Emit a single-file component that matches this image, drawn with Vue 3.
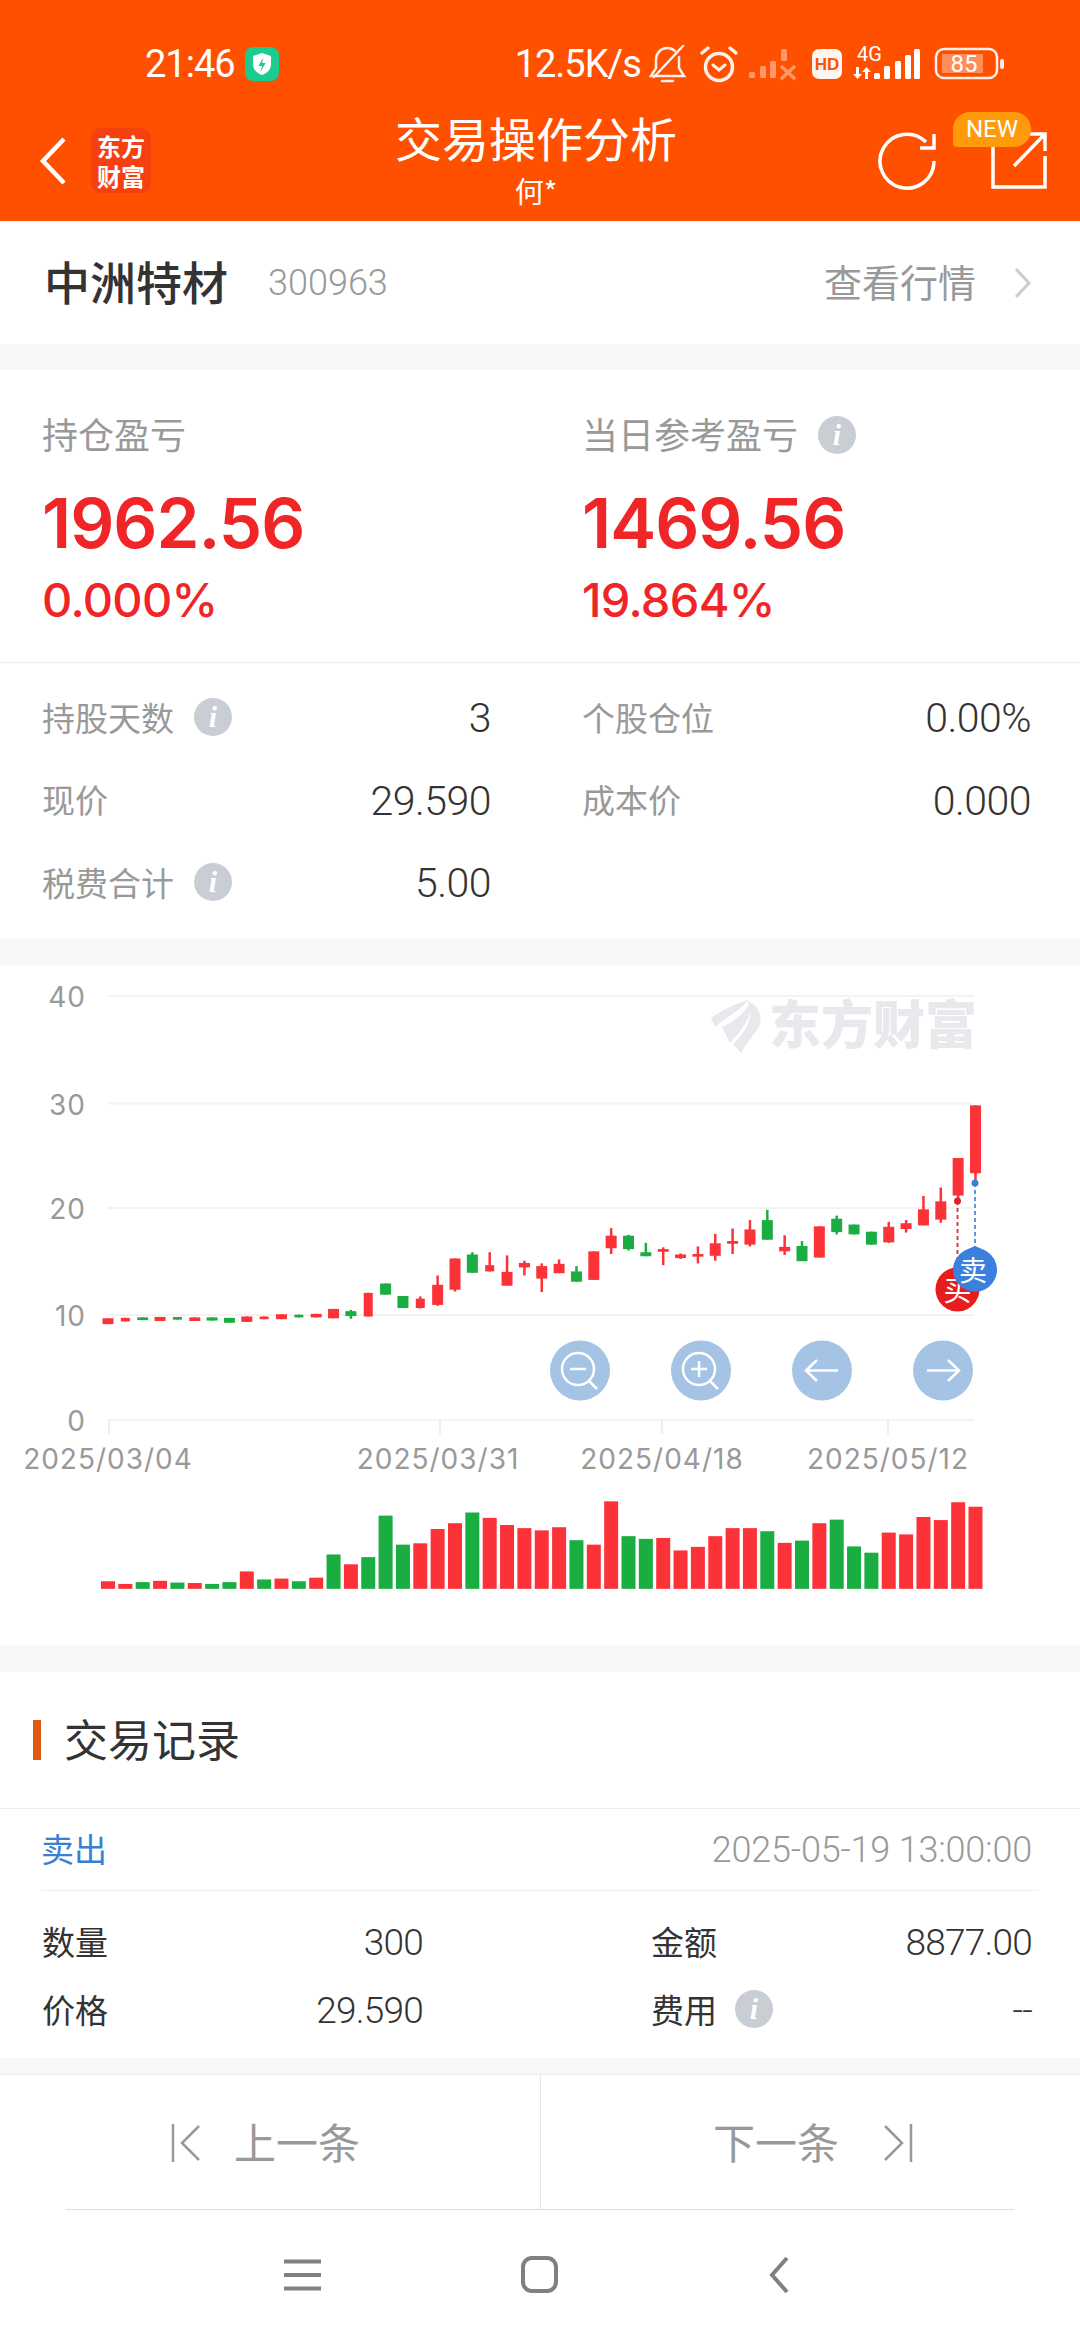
<script setup>
// values read off the chart, y in full page pixels after conversion
const toY = (z) => 950 + z / 2.24
const cx = (i) => 108 + i * 17.35

// color, body top, body bottom, wick top, wick bottom
const raw = [
  ['r', 825, 838], ['r', 824, 832], ['g', 823, 829], ['r', 822, 831], ['g', 822, 828],
  ['r', 823, 831], ['g', 823, 830], ['g', 824, 835], ['r', 821, 833], ['r', 821, 827],
  ['r', 816, 827], ['g', 817, 823], ['r', 815, 823], ['r', 804, 825], ['g', 809, 820, 806, 826],
  ['r', 768, 821], ['g', 747, 772], ['g', 775, 802], ['r', 781, 802, 776, 803], ['r', 750, 795, 729, 797],
  ['r', 691, 761, 691, 765], ['g', 682, 723, 677, 723], ['r', 706, 720, 677, 720], ['r', 721, 752, 684, 752], ['r', 701, 711, 696, 729],
  ['r', 708, 736, 702, 766], ['r', 703, 724, 693, 724], ['g', 720, 743, 708, 743], ['r', 675, 739], ['r', 640, 668, 623, 681],
  ['g', 640, 670, 638, 673], ['g', 677, 686, 656, 686], ['r', 670, 676, 666, 706], ['r', 682, 690, 680, 692], ['r', 681, 687, 664, 702],
  ['r', 657, 685, 636, 696], ['r', 652, 658, 624, 681], ['r', 626, 660, 605, 664], ['g', 605, 649, 582, 649], ['r', 665, 675, 639, 683],
  ['g', 663, 697, 652, 697], ['r', 619, 689], ['g', 602, 632, 595, 637], ['g', 615, 637], ['g', 631, 660],
  ['r', 620, 655, 609, 656], ['r', 612, 625, 605, 633], ['r', 581, 617, 551, 617], ['r', 563, 604, 532, 611], ['r', 466, 550, 466, 558],
  ['r', 348, 500, 348, 520]
]
const narrow = [1, 4, 9, 11, 15, 18, 22]
const candles = raw.map((c, i) => ({
  color: c[0] === 'r' ? '#fb3338' : '#1aad41',
  x: cx(i),
  w: narrow.includes(i) ? 9 : 11,
  top: toY(c[1]),
  h: (c[2] - c[1]) / 2.24,
  wt: toY(c[3] ?? c[1]),
  wb: toY(c[4] ?? c[2])
}))

const rawVol = [
  ['r', 1414], ['r', 1420], ['g', 1416], ['r', 1413], ['g', 1417], ['r', 1418], ['g', 1420], ['g', 1416], ['r', 1392], ['g', 1410],
  ['r', 1408], ['g', 1414], ['r', 1406], ['g', 1354], ['r', 1376], ['g', 1360], ['g', 1267], ['g', 1332], ['r', 1329], ['r', 1297],
  ['r', 1284], ['g', 1260], ['r', 1272], ['r', 1288], ['r', 1295], ['r', 1300], ['r', 1293], ['g', 1322], ['r', 1332], ['r', 1235],
  ['g', 1313], ['g', 1319], ['r', 1317], ['r', 1345], ['r', 1337], ['r', 1313], ['r', 1295], ['r', 1295], ['g', 1302], ['r', 1328],
  ['g', 1323], ['r', 1284], ['g', 1276], ['g', 1336], ['g', 1350], ['r', 1305], ['r', 1309], ['r', 1270], ['r', 1277], ['r', 1237],
  ['r', 1247]
]
const volumes = rawVol.map((v, i) => ({
  color: v[0] === 'r' ? '#fb3338' : '#1aad41',
  x: cx(i) - 7,
  top: toY(v[1]),
  h: (1431 - v[1]) / 2.24
}))

const grid = [
  { label: '40', y: 996 },
  { label: '30', y: 1103.5 },
  { label: '20', y: 1208 },
  { label: '10', y: 1315 },
  { label: '0', y: 1420 }
]
const dates = [
  { label: '2025/03/04', x: 108 },
  { label: '2025/03/31', x: 438 },
  { label: '2025/04/18', x: 662 },
  { label: '2025/05/12', x: 888 }
]
const ticks = [109, 440, 662, 888]
</script>

<template>
  <div class="page">
    <header class="header">
      <div class="status">
        <span class="clock">21:46</span>
        <svg class="shield" viewBox="0 0 34 34">
          <rect width="34" height="34" rx="8" fill="#1ccb8e" />
          <path d="M17 6l9 3v8c0 6-4 9-9 11-5-2-9-5-9-11V9z" fill="#fff" />
          <path d="M18.500 10l-5 9h3.500l-1.500 6 5-9h-3.500z" fill="#1ccb8e" />
        </svg>
        <span class="speed">12.5K/s</span>
        <svg class="status-icons" viewBox="650 44 358 42" width="358" height="42">
          <g fill="none" stroke="#fff" stroke-width="2.500" stroke-linecap="round" opacity=".92">
            <path d="M657 69v-8c0-7 5-12 11-12 3 0 6 1 8 3M680 58v11l5 8h-33l5-8" />
            <path d="M684 47L655 78" />
            <path d="M663 82h11" />
          </g>
          <g fill="none" stroke="#fff" stroke-linecap="round" opacity=".92">
            <circle cx="720" cy="68" r="13.500" stroke-width="3.500" />
            <path d="M703 54l6-5M737 54l-6-5" stroke-width="3.500" />
            <path d="M714 66l6 5 6-5" stroke-width="3" />
          </g>
          <g fill="#fff" opacity=".42">
            <rect x="750" y="73" width="6" height="6" rx="1.500" />
            <rect x="761" y="67" width="6" height="12" rx="1.500" />
            <rect x="771" y="62" width="6" height="17" rx="1.500" />
            <rect x="782" y="50" width="6" height="12" rx="1.500" />
            <path d="M782 67l14 13M796 67l-14 13" stroke="#fff" stroke-width="3.500" />
          </g>
          <rect x="813" y="50" width="30" height="30" rx="7" fill="#fff" opacity=".95" />
          <text x="828" y="71" class="hd">HD</text>
          <text x="858" y="62" class="net">4G</text>
          <g fill="#fff">
            <path d="M857 68h3v7h3l-4.500 5-4.500-5h3zM866 80h3v-7h3l-4.500-5-4.500 5h3z" />
            <rect x="875" y="74" width="6" height="6" rx="1.500" />
            <rect x="885" y="67" width="6" height="13" rx="1.500" />
            <rect x="896" y="62" width="6" height="18" rx="1.500" />
            <rect x="906" y="56" width="6" height="24" rx="1.500" />
            <rect x="915" y="50" width="6" height="30" rx="1.500" />
          </g>
          <rect x="937" y="50" width="61" height="29" rx="8" fill="none" stroke="#fff" stroke-width="2.500" opacity=".9" />
          <rect x="943" y="55" width="41" height="19" fill="#fff" opacity=".35" />
          <text x="965" y="73" class="batt">85</text>
          <rect x="1001" y="60" width="4" height="10" rx="2" fill="#fff" opacity=".9" />
        </svg>
      </div>
      <div class="navbar">
        <div class="nav-left">
          <svg class="back" viewBox="0 0 28 48">
            <path d="M25 2L4 24l21 22" fill="none" stroke="#fff" stroke-width="4.500" />
          </svg>
          <div class="brand">东方<br />财富</div>
        </div>
        <div class="nav-title">
          <div class="title">交易操作分析</div>
          <div class="subtitle">何*</div>
        </div>
        <div class="nav-right">
          <svg class="refresh" viewBox="876 130 62 60">
            <path d="M933 160a27 27 0 1 1-8-19" fill="none" stroke="#fff" stroke-width="3.500" />
            <path d="M933 133v14h-14" fill="none" stroke="#fff" stroke-width="3.500" />
          </svg>
          <div class="share">
            <svg viewBox="988 130 60 60">
              <path d="M992 145v41h52v-31" fill="none" stroke="#fff" stroke-width="3.500" />
              <path d="M1013 165l30-31M1027 133h17v17" fill="none" stroke="#fff" stroke-width="3.500" />
            </svg>
            <span class="new-badge">NEW</span>
          </div>
        </div>
      </div>
    </header>

    <section class="stock-row">
      <div class="stock-name">中洲特材</div>
      <div class="stock-code">300963</div>
      <div class="quote-link">查看行情</div>
      <svg class="chevron" viewBox="0 0 18 32">
        <path d="M2 2l13 14L2 30" fill="none" stroke="#ccc" stroke-width="3" />
      </svg>
    </section>

    <section class="summary">
      <div class="pnl">
        <div class="label-big">持仓盈亏</div>
        <div class="amount">1962.56</div>
        <div class="percent">0.000%</div>
      </div>
      <div class="pnl">
        <div class="label-big">当日参考盈亏 <span class="info">i</span></div>
        <div class="amount">1469.56</div>
        <div class="percent">19.864%</div>
      </div>
    </section>

    <section class="stats">
      <div class="stat"><span class="stat-label">持股天数 <span class="info">i</span></span><span class="stat-value">3</span></div>
      <div class="stat"><span class="stat-label">个股仓位</span><span class="stat-value">0.00%</span></div>
      <div class="stat"><span class="stat-label">现价</span><span class="stat-value">29.590</span></div>
      <div class="stat"><span class="stat-label">成本价</span><span class="stat-value">0.000</span></div>
      <div class="stat"><span class="stat-label">税费合计 <span class="info">i</span></span><span class="stat-value">5.00</span></div>
    </section>

    <section class="chart">
      <svg viewBox="0 965 1080 680" width="1080" height="680">
        <g class="watermark">
          <path d="M711 1018c11-8 24-14 37-18-6 9-18 15-33 27z" />
          <path d="M722 1027c12-5 23-14 28-25 3 13-6 26-20 41z" />
          <path d="M747 1000c15 8 18 22 7 34-6 8-10 14-13 19l-8-9c12-12 23-26 14-44z" />
          <text x="769" y="1044">东方财富</text>
        </g>

        <g v-for="g in grid" :key="g.label">
          <line x1="108" :y1="g.y" x2="974" :y2="g.y" stroke="#f3f3f3" stroke-width="2" />
          <text x="86" :y="g.y + 11" class="axis" text-anchor="end">{{ g.label }}</text>
        </g>
        <line v-for="t in ticks" :key="t" :x1="t" y1="1420" :x2="t" y2="1434" stroke="#eee" stroke-width="2" />
        <text v-for="d in dates" :key="d.label" :x="d.x" y="1469" class="axis" text-anchor="middle">{{ d.label }}</text>

        <g v-for="(c, i) in candles" :key="i">
          <line :x1="c.x" :y1="c.wt" :x2="c.x" :y2="c.wb" :stroke="c.color" stroke-width="2.500" />
          <rect :x="c.x - c.w / 2" :y="c.top" :width="c.w" :height="c.h" :fill="c.color" />
        </g>

        <rect
          v-for="(v, i) in volumes"
          :key="'v' + i"
          :x="v.x"
          :y="v.top"
          width="14"
          :height="v.h"
          :fill="v.color"
        />

        <!-- zoom and pan buttons -->
        <g fill="#a5c3e4">
          <circle cx="580" cy="1370.500" r="30" />
          <circle cx="701" cy="1370.500" r="30" />
          <circle cx="822" cy="1370.500" r="30" />
          <circle cx="943" cy="1370.500" r="30" />
        </g>
        <g fill="none" stroke="#fff" stroke-width="2.500">
          <circle cx="578" cy="1369" r="16" />
          <path d="M570 1369h16M589 1381l8 8" />
          <circle cx="699" cy="1369" r="16" />
          <path d="M691 1369h16M699 1361v16M710 1381l8 8" />
          <path d="M838 1370.500h-32M817 1360l-11 10.500 11 10.500" />
          <path d="M927 1370.500h32M948 1360l11 10.500-11 10.500" />
        </g>

        <!-- buy and sell markers -->
        <line x1="957.500" y1="1201" x2="957.500" y2="1270" stroke="#d8404a" stroke-width="2" stroke-dasharray="4 3" />
        <circle cx="957.500" cy="1201" r="3.500" fill="#e0202a" />
        <path d="M957.500 1266l5 2a22 22 0 1 1-10 0z" fill="#e81c1c" />
        <text x="957.500" y="1301" class="marker">买</text>
        <line x1="975" y1="1183" x2="975" y2="1250" stroke="#5a96e0" stroke-width="2" stroke-dasharray="4 3" />
        <circle cx="975" cy="1183" r="3.500" fill="#3a80dc" />
        <path d="M975 1246l7 3a22 22 0 1 1-14 0z" fill="#3a80dc" />
        <text x="973" y="1281" class="marker">卖</text>
      </svg>
    </section>

    <section class="records">
      <div class="records-head">
        <span class="records-bar"></span>
        <span class="records-title">交易记录</span>
      </div>
      <div class="record-top">
        <span class="side">卖出</span>
        <span class="time">2025-05-19 13:00:00</span>
      </div>
      <div class="record-grid">
        <div class="cell"><span class="cell-label">数量</span><span class="cell-value">300</span></div>
        <div class="cell"><span class="cell-label">金额</span><span class="cell-value">8877.00</span></div>
        <div class="cell"><span class="cell-label">价格</span><span class="cell-value">29.590</span></div>
        <div class="cell"><span class="cell-label">费用 <span class="info">i</span></span><span class="cell-value">--</span></div>
      </div>
    </section>

    <section class="pager">
      <div class="pager-btn prev">
        <svg viewBox="0 0 30 38" class="pager-icon">
          <path d="M2 0v38M28 2L11 19l17 17" fill="none" stroke="#999" stroke-width="2.500" />
        </svg>
        <span class="pager-text">上一条</span>
      </div>
      <div class="pager-btn next">
        <span class="pager-text">下一条</span>
        <svg viewBox="0 0 30 38" class="pager-icon">
          <path d="M28 0v38M2 2l17 17L2 36" fill="none" stroke="#999" stroke-width="2.500" />
        </svg>
      </div>
    </section>

    <footer class="sysnav">
      <svg viewBox="0 0 38 32" class="sys-menu">
        <path d="M0 2.500h37M0 16h37M0 29.500h37" stroke="#808080" stroke-width="4" />
      </svg>
      <svg viewBox="0 0 38 38" class="sys-home">
        <rect x="2" y="2" width="33" height="33" rx="9" fill="none" stroke="#808080" stroke-width="4" />
      </svg>
      <svg viewBox="0 0 22 38" class="sys-back">
        <path d="M19 2L4 19l15 17" fill="none" stroke="#808080" stroke-width="4" />
      </svg>
    </footer>
  </div>
</template>

<style>
html,
body {
  margin: 0;
  background: #fff;
}
</style>

<style scoped>
.page {
  width: 1080px;
  height: 2340px;
  overflow: hidden;
  background: #fff;
  font-family: Roboto, "Noto Sans CJK SC", sans-serif;
  color: #333;
}

.header {
  height: 221px;
  background: #ff5000;
  color: #fff;
}

.status {
  height: 106px;
  display: flex;
  align-items: center;
  padding: 22px 0 0 145px;
  box-sizing: border-box;
}

.clock {
  font-size: 38px;
  line-height: 44px;
  letter-spacing: -1px;
}

.shield {
  width: 34px;
  height: 34px;
  margin-left: 10px;
}

.speed {
  margin-left: 236px;
  font-size: 38px;
  line-height: 44px;
  letter-spacing: -1px;
}

.status-icons {
  margin-left: 8px;
}

.hd {
  font-family: "Liberation Sans", sans-serif;
  font-size: 17px;
  font-weight: 700;
  fill: #ff5000;
  text-anchor: middle;
}

.net {
  font-family: Roboto, sans-serif;
  font-size: 20px;
  fill: #fff;
}

.batt {
  font-family: Roboto, sans-serif;
  font-size: 24px;
  fill: #fff;
  text-anchor: middle;
}

.navbar {
  height: 115px;
  display: flex;
}

.nav-left {
  width: 386px;
  display: flex;
  align-items: center;
  padding: 0 0 6px 39px;
  box-sizing: border-box;
}

.back {
  width: 28px;
  height: 48px;
}

.brand {
  width: 60px;
  height: 65px;
  margin-left: 24px;
  border-radius: 10px;
  background: #f5400f;
  font-family: "Noto Sans CJK SC", sans-serif;
  font-size: 24px;
  font-weight: 700;
  line-height: 30px;
  text-align: center;
  padding-top: 3px;
  box-sizing: border-box;
}

.nav-title {
  width: 300px;
  text-align: center;
  white-space: nowrap;
  font-family: "Noto Sans CJK SC", sans-serif;
}

.title {
  font-size: 47px;
  line-height: 62px;
}

.subtitle {
  font-size: 29px;
  line-height: 44px;
}

.nav-right {
  flex: 1;
  display: flex;
  padding: 25px 0 0 191px;
  box-sizing: border-box;
}

.refresh {
  width: 62px;
  height: 60px;
}

.share {
  position: relative;
  width: 60px;
  height: 60px;
  margin-left: 50px;
}

.share svg {
  width: 60px;
  height: 60px;
}

.new-badge {
  position: absolute;
  left: -36px;
  top: -19px;
  width: 78px;
  height: 35px;
  border-radius: 17px 17px 17px 4px;
  background: #ff9a0a;
  color: #fff;
  font-size: 24px;
  line-height: 35px;
  text-align: center;
}

.stock-row {
  height: 149px;
  display: flex;
  align-items: center;
  padding: 0 48px 0 44px;
  box-sizing: border-box;
  border-bottom: 26px solid #f7f7f7;
}

.stock-name {
  font-family: "Noto Sans CJK SC", sans-serif;
  font-size: 46px;
  font-weight: 500;
  color: #333;
  padding-bottom: 5px;
}

.stock-code {
  margin-left: 40px;
  font-size: 36px;
  font-weight: 300;
  color: #999;
}

.quote-link {
  margin-left: auto;
  font-family: "Noto Sans CJK SC", sans-serif;
  font-size: 38px;
  color: #999;
  padding-bottom: 5px;
}

.chevron {
  width: 18px;
  height: 32px;
  margin-left: 38px;
}

.summary {
  height: 293px;
  display: grid;
  grid-template-columns: 540px 1fr;
  padding: 42px 0 0 42px;
  box-sizing: border-box;
  border-bottom: 1px solid #eee;
}

.label-big {
  display: flex;
  align-items: center;
  gap: 20px;
  height: 42px;
  font-family: "Noto Sans CJK SC", sans-serif;
  font-size: 36px;
  color: #999;
}

.label-big .info {
  margin-top: 4px;
}

.amount {
  margin-top: 22px;
  font-family: Inter, sans-serif;
  font-size: 69px;
  line-height: 94px;
  font-weight: 600;
  color: #f02528;
  letter-spacing: -1px;
}

.percent {
  font-family: Inter, sans-serif;
  font-size: 47px;
  line-height: 60px;
  font-weight: 500;
  color: #f02528;
  letter-spacing: -0.700px;
}

.info {
  display: inline-block;
  width: 38px;
  height: 38px;
  border-radius: 50%;
  background: #c9cdd4;
  color: #fff;
  font-family: "Liberation Serif", serif;
  font-size: 30px;
  font-style: italic;
  font-weight: 700;
  line-height: 38px;
  text-align: center;
}

.stats {
  height: 302px;
  display: grid;
  grid-template-columns: 449px 449px;
  grid-auto-rows: 82.500px;
  column-gap: 91px;
  padding: 14px 0 0 42px;
  box-sizing: border-box;
  border-bottom: 26px solid #f7f7f7;
}

.stat {
  display: flex;
  justify-content: space-between;
  align-items: center;
}

.stat-label {
  display: flex;
  align-items: center;
  gap: 20px;
  font-family: "Noto Sans CJK SC", sans-serif;
  font-size: 33px;
  color: #999;
  padding-bottom: 3px;
}

.stat-value {
  font-size: 41px;
  font-weight: 300;
  letter-spacing: -0.500px;
  color: #333;
}

.chart {
  height: 680px;
}

.chart svg {
  display: block;
}

.axis {
  font-family: Inter, sans-serif;
  font-size: 28px;
  letter-spacing: 1px;
  fill: #999;
}

.watermark {
  fill: #e9e9ed;
}

.watermark text {
  font-family: "Noto Sans CJK SC", sans-serif;
  font-size: 52px;
  font-weight: 900;
}

.marker {
  font-family: "Noto Sans CJK SC", sans-serif;
  font-size: 28px;
  fill: #fff;
  text-anchor: middle;
}

.records {
  border-top: 27px solid #f7f7f7;
  border-bottom: 16px solid #f7f7f7;
}

.records-head {
  height: 137px;
  display: flex;
  align-items: center;
  padding-left: 33px;
  border-bottom: 1px solid #eee;
  box-sizing: border-box;
}

.records-bar {
  width: 8px;
  height: 40px;
  background: #e25a12;
}

.records-title {
  margin-left: 23px;
  font-family: "Noto Sans CJK SC", sans-serif;
  font-size: 44px;
  color: #333;
  padding-bottom: 5px;
}

.record-top {
  height: 82px;
  margin: 0 42px 0 41px;
  display: flex;
  justify-content: space-between;
  align-items: center;
  border-bottom: 1px solid #eee;
  box-sizing: border-box;
  padding-right: 6px;
}

.side {
  font-family: "Noto Sans CJK SC", sans-serif;
  font-size: 33px;
  color: #3a80d0;
  padding-bottom: 3px;
}

.time {
  font-size: 36px;
  font-weight: 300;
  color: #999;
  letter-spacing: -0.200px;
}

.record-grid {
  height: 167px;
  display: grid;
  grid-template-columns: 381px 381px;
  grid-auto-rows: 68px;
  column-gap: 228px;
  padding: 17px 0 0 42px;
  box-sizing: border-box;
}

.cell {
  display: flex;
  justify-content: space-between;
  align-items: center;
}

.cell-label {
  display: flex;
  align-items: center;
  gap: 18px;
  font-family: "Noto Sans CJK SC", sans-serif;
  font-size: 33px;
  color: #333;
  padding-bottom: 3px;
}

.cell-value {
  font-size: 37px;
  font-weight: 300;
  letter-spacing: -0.800px;
  color: #333;
}

.pager {
  height: 136px;
  display: grid;
  grid-template-columns: 541px 1fr;
  position: relative;
  border-top: 1px solid #eee;
  box-sizing: border-box;
}

.pager::after {
  content: "";
  position: absolute;
  left: 66px;
  right: 66px;
  bottom: 0;
  border-bottom: 1px solid #ddd;
}

.pager-btn {
  display: flex;
  align-items: center;
  font-family: "Noto Sans CJK SC", sans-serif;
  font-size: 42px;
  color: #999;
}

.pager-text {
  padding-bottom: 5px;
}

.prev {
  padding-left: 171px;
  gap: 33px;
  border-right: 1px solid #e6e6e6;
}

.next {
  padding-left: 172px;
  gap: 44px;
}

.pager-icon {
  width: 30px;
  height: 38px;
}

.sysnav {
  height: 130px;
  display: flex;
  align-items: center;
  padding: 0 0 0 284px;
}

.sys-menu {
  width: 38px;
  height: 32px;
}

.sys-home {
  width: 38px;
  height: 38px;
  margin-left: 199px;
}

.sys-back {
  width: 22px;
  height: 38px;
  margin-left: 209px;
}
</style>
